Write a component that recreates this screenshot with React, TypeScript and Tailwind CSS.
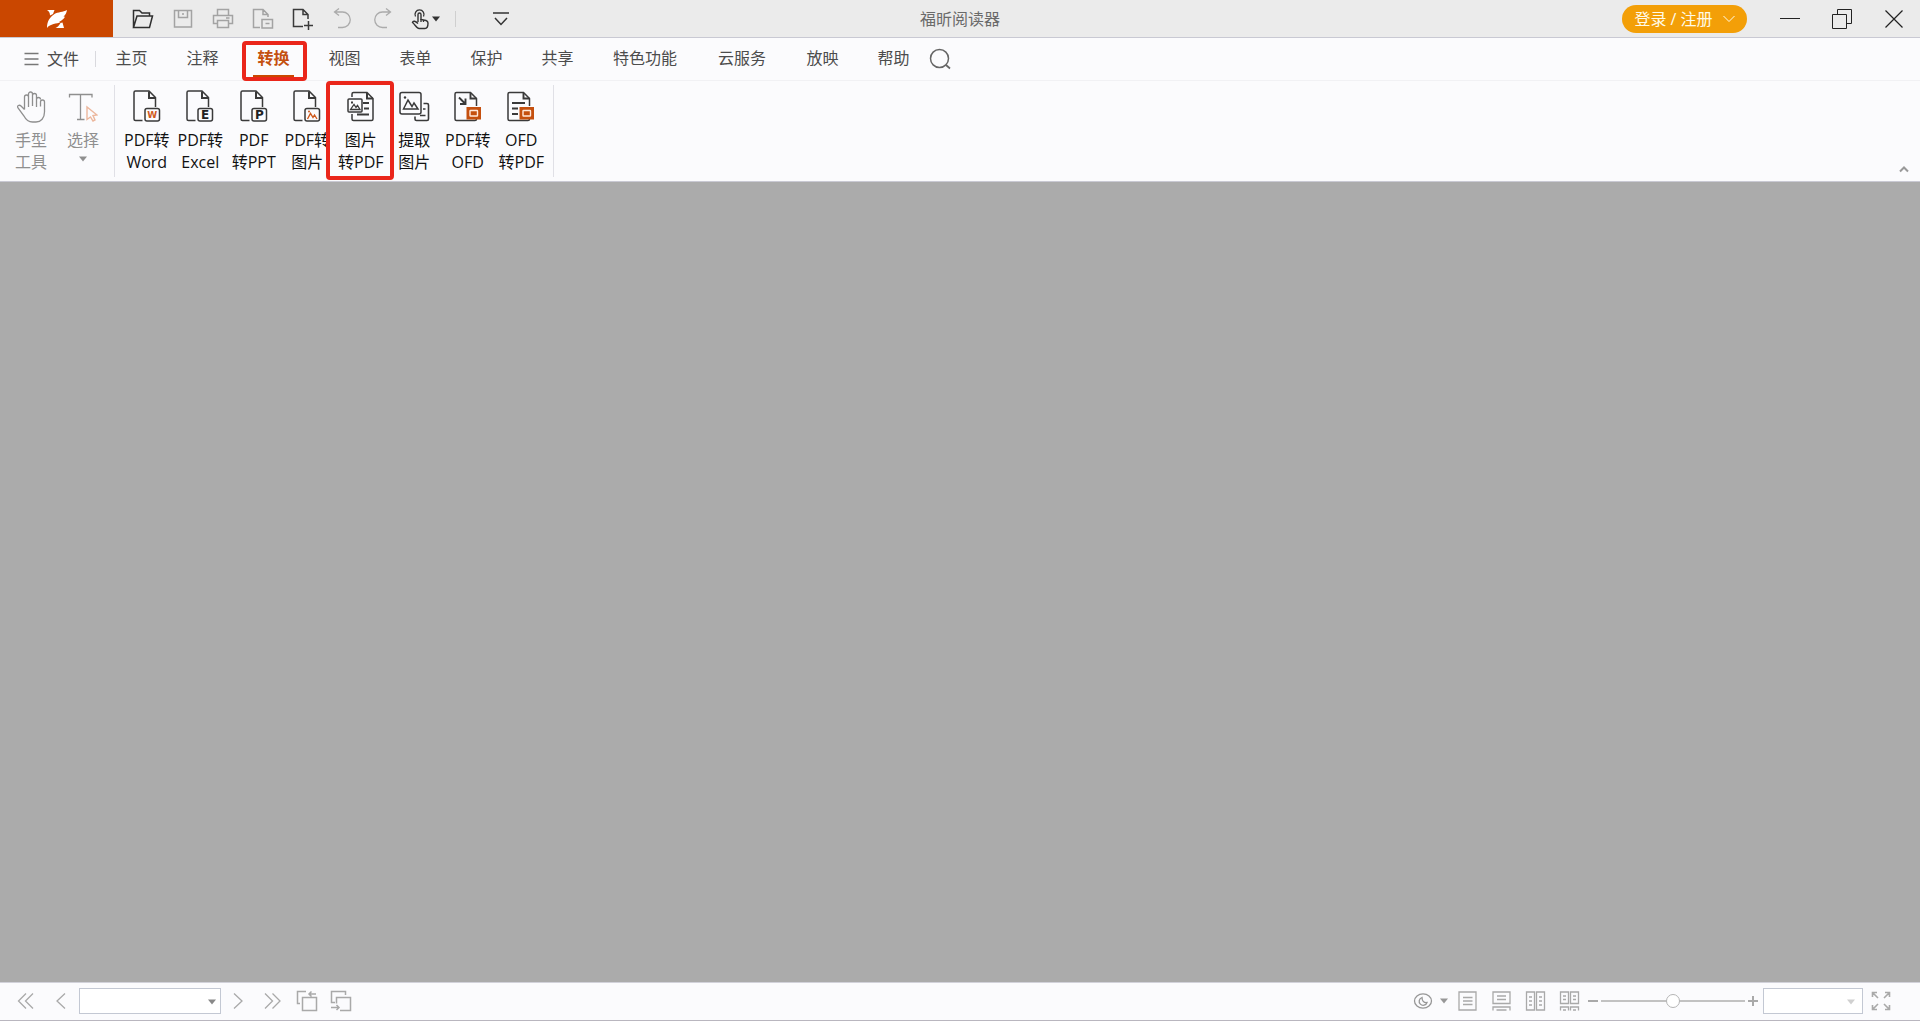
import React from 'react';

type IconProps = { className?: string; w?: number; h?: number; children?: React.ReactNode };

const Icon: React.FC<IconProps> = ({ className = '', w = 22, h = 22, children }) => (
  <svg
    className={`block shrink-0 ${className}`}
    width={w}
    height={h}
    viewBox={`0 0 ${w} ${h}`}
    fill="none"
    stroke="currentColor"
    strokeWidth="1.3"
    aria-hidden="true"
  >
    {children}
  </svg>
);

const Caret: React.FC<{ className?: string }> = ({ className = '' }) => (
  <Icon w={10} h={6} className={className}>
    <path d="M1 .5h8L5 5.5z" fill="currentColor" stroke="none" />
  </Icon>
);

/* Quick access toolbar */

const quickActions = [
  {
    label: '打开',
    color: 'text-[#2f2f2f]',
    icon: <path d="M1.5 19.5v-17h6l2.5 2.5h7.5v2.5M1.5 19.5l3.500-11.500h15.500l-3 11.500z" strokeWidth="1.5" />,
  },
  {
    label: '保存',
    color: 'text-[#a3a3a3]',
    icon: <path d="M2.5 2.5h17v16.5h-17zM6.5 2.5v7h9v-7M10 6h2" strokeWidth="1.5" />,
  },
  {
    label: '打印',
    color: 'text-[#a3a3a3]',
    icon: <path d="M5.5 7.5v-6h11v6M5.5 15.5h-4v-8h19v8h-4M5.5 12.5h11v7h-11zM14 10h3.5" strokeWidth="1.5" />,
  },
  {
    label: '另存为',
    color: 'text-[#a3a3a3]',
    icon: <path d="M8 19.5H1.5v-18h9.5l5 5V9M11 1.5v5h5M10 11.5h10.5v8.5H10zM13.500 15.5h4" strokeWidth="1.5" />,
  },
  {
    label: '新建',
    color: 'text-[#3a3a3a]',
    icon: <path d="M11 18.5H1.5v-17h9.5l5 5V11M11 1.5v5h5M16.500 13v9M12 17.5h9" strokeWidth="1.5" />,
  },
  {
    label: '撤销',
    color: 'text-[#ababab]',
    icon: <path d="M7 .5 2.5 4 7 7.5M2.5 4h8a7.500 7.500 0 0 1 0 15.5H6" />,
  },
  {
    label: '恢复',
    color: 'text-[#ababab]',
    icon: <path d="m14 .5 4.500 3.500L14 7.5M18.500 4h-8a7.500 7.500 0 0 0 0 15.5H15" />,
  },
];

const Logo = () => (
  <svg className="block" width="22" height="20" viewBox="0 0 22 20" fill="#fff" aria-hidden="true">
    <path d="M1 1h7.500L7 5 4 6.500C4 4 3 2 1 1z" />
    <path d="M21 1c-.5 3-1.500 5-3.500 6.500l1.500.2c-1.500 2.500-3.500 4-6 5l1.500.3C11 15 4 14.500 1 19 1 12 4 8 8.500 5 12 2.800 17 3.500 21 1z" />
    <path d="m14.500 14 2-.5L18 19H9.500c2-.8 3.500-2.500 5-5z" />
  </svg>
);

const TitleBar = () => (
  <header className="relative flex h-[38px] shrink-0 items-center border-b border-[#c9c9d3] bg-[#ebebeb]">
    <button aria-label="福昕" className="flex h-full w-[113px] items-center justify-center bg-[#ca4700]">
      <Logo />
    </button>
    <div className="ml-2.5 flex h-full items-center">
      {quickActions.map((action) => (
        <button key={action.label} aria-label={action.label} className={`flex h-full w-10 items-center justify-center ${action.color}`}>
          <Icon>{action.icon}</Icon>
        </button>
      ))}
      <button aria-label="触摸模式" className="ml-2 flex h-full items-center gap-0.5 text-[#333]">
        <Icon w={18}>
          <path d="M7 14V6.500a1.500 1.500 0 0 1 3 0v5l5 1c1.500.5 2 1 2 2.500 0 3-1 5.500-3 5.500H8c-2 0-4-4-6.500-6 .5-2 3-1.500 5.500 1" strokeWidth="1.4" />
          <path d="M4.500 8.500a4.500 4.500 0 1 1 8 0M10 11v3M12.500 12v2" />
        </Icon>
        <Caret />
      </button>
    </div>
    <div className="ml-3.5 h-4 w-px bg-[#cfcfcf]" />
    <button aria-label="自定义快速访问工具栏" className="ml-9 text-[#333]">
      <Icon w={18} h={18}>
        <path d="M1 3h16M3 8l6 6.500L15 8" strokeWidth="1.5" />
      </Icon>
    </button>
    <h1 className="absolute left-1/2 -translate-x-1/2 text-base text-[#6a6a6a]">福昕阅读器</h1>
    <button className="ml-auto mr-[17px] flex h-7 w-[125px] items-center justify-center gap-2.5 rounded-full bg-[#f39f08] text-base text-[#fffbe8]">
      登录 / 注册
      <Icon w={12} h={8}>
        <path d="m.5 1 5.500 5.500L11.500 1" strokeWidth="1" />
      </Icon>
    </button>
    <button aria-label="最小化" className="flex h-full w-[52px] items-center justify-center text-[#222]">
      <Icon>
        <path d="M1 10.500h20" strokeWidth="1" />
      </Icon>
    </button>
    <button aria-label="还原" className="flex h-full w-[52px] items-center justify-center text-[#222]">
      <Icon>
        <path d="M6.500 6V1.500h14v14H16M1.500 6.500h14v14h-14z" strokeWidth="1" />
      </Icon>
    </button>
    <button aria-label="关闭" className="flex h-full w-[52px] items-center justify-center text-[#222]">
      <Icon>
        <path d="m2.500 2.500 17 17M19.500 2.500l-17 17" strokeWidth="1.2" />
      </Icon>
    </button>
  </header>
);

/* Menu tabs */

const menuItems = [
  { label: '主页', width: 'w-[71px]' },
  { label: '注释', width: 'w-[71px]' },
  { label: '转换', width: 'w-[71px]', active: true },
  { label: '视图', width: 'w-[71px]' },
  { label: '表单', width: 'w-[71px]' },
  { label: '保护', width: 'w-[71px]' },
  { label: '共享', width: 'w-[71px]' },
  { label: '特色功能', width: 'w-[104px]' },
  { label: '云服务', width: 'w-[90px]' },
  { label: '放映', width: 'w-[71px]' },
  { label: '帮助', width: 'w-[71px]' },
];

const MenuBar = () => (
  <nav className="flex h-[43px] shrink-0 items-center border-b border-[#f1f1f4] text-base text-[#4c4c4c]">
    <button className="ml-6 flex items-center gap-2 pr-4">
      <Icon w={15} h={14} className="text-[#777]">
        <path d="M.5 1.500h14M.5 7h14M.5 12.500h14" />
      </Icon>
      文件
    </button>
    <div className="h-4 w-px bg-[#d9d9de]" />
    {menuItems.map((item) => (
      <button key={item.label} className={`relative h-full pb-0.5 ${item.width} ${item.active ? 'font-bold text-[#c4500f]' : ''}`}>
        {item.label}
        {item.active && (
          <>
            <span className="absolute inset-x-[15px] bottom-[3px] h-0.5 bg-[#ca4700]" />
            <span className="absolute -bottom-px left-1 right-0.5 top-[3px] rounded border-4 border-[#ea261b]" />
          </>
        )}
      </button>
    ))}
    <button aria-label="搜索" className="text-[#666]">
      <Icon>
        <circle cx="10.500" cy="10.500" r="9" strokeWidth="1.5" />
        <path d="m17 17 4 3.500" strokeWidth="1.8" />
      </Icon>
    </button>
  </nav>
);

/* Ribbon */

const PagePath = () => (
  <>
    <path d="M9.500 30.500H2.500a1.500 1.500 0 0 1-1.500-1.500V2.500A1.500 1.500 0 0 1 2.500 1H16l6.500 6.500V17" strokeWidth="1.5" />
    <path d="M16 1.500V8h6.500" strokeWidth="2" />
  </>
);

const BadgeIcon: React.FC<{ children: React.ReactNode }> = ({ children }) => (
  <Icon w={28} h={32}>
    <PagePath />
    <rect x="12" y="18.500" width="14.500" height="12.500" rx="2" strokeWidth="1.5" />
    {children}
  </Icon>
);

const letterClass = "font-['DejaVu_Sans'] font-bold";

const WordIcon = () => (
  <BadgeIcon>
    <text x="19.200" y="28" textAnchor="middle" className={`${letterClass} text-[9px]`} fill="#cf5a1d" stroke="none">W</text>
  </BadgeIcon>
);

const ExcelIcon = () => (
  <BadgeIcon>
    <text x="19.200" y="29" textAnchor="middle" className={`${letterClass} text-[12px]`} fill="#222" stroke="none">E</text>
  </BadgeIcon>
);

const PptIcon = () => (
  <BadgeIcon>
    <text x="19.500" y="29" textAnchor="middle" className={`${letterClass} text-[12px]`} fill="#222" stroke="none">P</text>
  </BadgeIcon>
);

const ToImageIcon = () => (
  <BadgeIcon>
    <path d="m14.500 29 3-5.500 2.500 4 1.500-2.500 2.500 4" stroke="#cf5a1d" strokeWidth="1.4" />
    <circle cx="16" cy="21.500" r="1" fill="#cf5a1d" stroke="none" />
  </BadgeIcon>
);

const FromImageIcon = () => (
  <Icon w={28} h={32}>
    <path d="M5 7V4a1.500 1.500 0 0 1 1.500-1.500H20l6 6V29a1.500 1.500 0 0 1-1.500 1.500h-18A1.500 1.500 0 0 1 5 29v-5" strokeWidth="1.5" />
    <path d="M20 3v5.500h6" strokeWidth="2" />
    <rect x="1" y="9" width="14" height="13" rx="1" strokeWidth="1.5" />
    <path d="m3.500 19.500 3.500-5 2 3 1.500-2 2.500 4z" strokeWidth="1.3" />
    <path d="M4 12.500h2M16 13h6M17 18.500h5M10 24.500h12" strokeWidth="1.8" />
  </Icon>
);

const ExtractIcon = () => (
  <Icon w={32} h={32}>
    <rect x="2" y="2.500" width="21" height="21.500" rx="2" strokeWidth="1.5" />
    <path d="m5.500 19 4.500-9 4 6.500 2-3.500 4 6z" strokeWidth="1.5" />
    <circle cx="7" cy="7.500" r="1.200" fill="currentColor" stroke="none" />
    <path d="M25.500 13.500H29a1.500 1.500 0 0 1 1.500 1.500v14a1.500 1.500 0 0 1-1.500 1.500H18.500A1.500 1.500 0 0 1 17 29v-2.500M25 19h2.500M22 25.500h5.500" strokeWidth="1.6" />
  </Icon>
);

const OfdBadge = () => (
  <>
    <rect x="12.500" y="17" width="14.500" height="12.500" fill="#c5500f" stroke="none" />
    <rect x="16" y="20.500" width="7.500" height="5.500" rx=".5" stroke="#ffe9dc" strokeWidth="1.4" />
  </>
);

const ToOfdIcon = () => (
  <Icon w={28} h={32}>
    <path d="M22.500 16V8.500l-6-6h-14A1.500 1.500 0 0 0 1 4v25a1.500 1.500 0 0 0 1.500 1.500h18.500a1.500 1.500 0 0 0 1.500-1.500" strokeWidth="1.5" />
    <path d="M16.500 3v5.500h6M5 7.500l6 6M11.500 8.500v5.500H6" strokeWidth="1.9" />
    <OfdBadge />
  </Icon>
);

const FromOfdIcon = () => (
  <Icon w={28} h={32}>
    <path d="M22.500 16V8.500l-6-6h-14A1.500 1.500 0 0 0 1 4v25a1.500 1.500 0 0 0 1.500 1.500h18.500a1.500 1.500 0 0 0 1.500-1.500" strokeWidth="1.5" />
    <path d="M16.500 3v5.500h6M5 13h13M5 18.500h6M5 24h6" strokeWidth="1.9" />
    <OfdBadge />
  </Icon>
);

const HandIcon = () => (
  <Icon w={30} h={34}>
    <path
      d="M8.500 19.500V7a2 2 0 0 1 4 0v10M12.500 16V4a2 2 0 0 1 4 0v12M16.500 15V5.500a2 2 0 0 1 4 0V17M20.500 16V9.500a2 2 0 0 1 4 0M24.500 16.500v-4.500a1.900 1.900 0 0 1 4 0V22c0 6-3.500 10-8.500 10h-3.500c-4 0-6.500-2-8.500-6L2 18c-1.500-2.500 1.500-3.500 3-2l3.500 3.500"
      strokeWidth="1.3"
    />
  </Icon>
);

const SelectIcon = () => (
  <Icon w={30} h={34}>
    <path d="M1.500 7.500V4.500H24v3M12.500 4.500v25M9 29.500h7.500" strokeWidth="1.3" />
    <path d="M19 17v12.500l3.500-2.500 2.500 4 2-1-2-4.500 4-.5z" stroke="#ecb79d" strokeWidth="1.4" />
  </Icon>
);

const convertTools = [
  { lines: ['PDF转', 'Word'], icon: <WordIcon /> },
  { lines: ['PDF转', 'Excel'], icon: <ExcelIcon /> },
  { lines: ['PDF', '转PPT'], icon: <PptIcon /> },
  { lines: ['PDF转', '图片'], icon: <ToImageIcon /> },
  { lines: ['图片', '转PDF'], icon: <FromImageIcon />, highlighted: true },
  { lines: ['提取', '图片'], icon: <ExtractIcon /> },
  { lines: ['PDF转', 'OFD'], icon: <ToOfdIcon /> },
  { lines: ['OFD', '转PDF'], icon: <FromOfdIcon /> },
];

const Ribbon = () => (
  <section className="flex h-[101px] shrink-0 border-b border-[#c9c9d3] text-base leading-[22px]">
    <div className="ml-[5px] flex text-[#8f8f8f]">
      <button className="flex w-[52px] flex-col items-center gap-[5px] pt-[9px]">
        <HandIcon />
        <span>手型<br />工具</span>
      </button>
      <button className="flex w-[52px] flex-col items-center gap-[5px] pt-[9px]">
        <SelectIcon />
        <span>选择</span>
        <Caret />
      </button>
    </div>
    <div className="my-1 ml-[5px] w-px bg-[#e0e0e6]" />
    <div className="ml-[5px] grid w-[428px] grid-cols-8 text-[#111]">
      {convertTools.map((tool) => (
        <button key={tool.lines.join('')} className="relative flex flex-col items-center gap-[7px] whitespace-nowrap pt-[9px]">
          <span className="text-[#3a3a3a]">{tool.icon}</span>
          <span>{tool.lines[0]}<br />{tool.lines[1]}</span>
          {tool.highlighted && <span className="absolute -left-2 -right-1.5 bottom-px top-0 rounded border-4 border-[#ea261b]" />}
        </button>
      ))}
    </div>
    <div className="my-1 ml-[5px] w-px bg-[#e0e0e6]" />
    <button aria-label="折叠功能区" className="mb-2 ml-auto mr-2.5 self-end text-[#999]">
      <Icon w={12} h={8}>
        <path d="m2 6.500 4-4 4 4" strokeWidth="2" />
      </Icon>
    </button>
  </section>
);

/* Status bar */

const viewModes = [
  { label: '单页', path: 'M2 2h17v18H2zM6 7.500h9.500M6 11h9.500M6 14.500h9.500' },
  { label: '连续', path: 'M2 2h17v11.500H2zM6 6h9M6 9.500h9M2 20.500v-3.500h17v3.500M5.500 20h10' },
  { label: '双页', path: 'M1.500 2h8v18h-8zM11.500 2h8v18h-8zM4 7h3M4 11h3M4 15h3M14 7h3M14 11h3M14 15h3' },
  { label: '双页连续', path: 'M1.500 2h8v11.500h-8zM11.500 2h8v11.500h-8zM4 6h3M4 9.500h3M14 6h3M14 9.500h3M1.500 20.500v-3.500h8v3.500M11.500 20.500v-3.500h8v3.500M4 20h3M14 20h3' },
];

const StatusBar = () => (
  <footer className="flex h-[39px] shrink-0 items-center justify-between border-b border-t border-b-[#b9b6bf] border-t-[#d2d2da] pb-0.5 text-[#a9a9a9]">
    <div className="flex items-center">
      <button aria-label="第一页" className="ml-4">
        <Icon w={20}><path d="m10 3.500-7.500 7.500 7.500 7.500M17 3.500 9.500 11l7.500 7.500" /></Icon>
      </button>
      <button aria-label="上一页" className="ml-[18px]">
        <Icon w={14}><path d="M11 3.500 3 11l8 7.500" /></Icon>
      </button>
      <div className="relative ml-[11px] h-[26px] w-[142px] border border-[#c3c8d3] bg-white">
        <select aria-label="页码" className="h-full w-full appearance-none bg-transparent outline-none" />
        <Caret className="pointer-events-none absolute right-[3px] top-2.5 text-[#888]" />
      </div>
      <button aria-label="下一页" className="ml-2.5">
        <Icon w={14}><path d="m3 3.500 8 7.500-8 7.500" /></Icon>
      </button>
      <button aria-label="最后一页" className="ml-[17px]">
        <Icon w={20}><path d="m3 3.500 7.500 7.500L3 18.500M10.500 3.500 18 11l-7.500 7.500" /></Icon>
      </button>
      <button aria-label="上一视图" className="ml-3.5">
        <Icon><path d="M4 13.500H1.500v-12H10M6.500 7.500h14v13h-14zM20 4h-7M15.500 1.500 13 4l2.500 2.500" strokeWidth="1.5" /></Icon>
      </button>
      <button aria-label="下一视图" className="ml-3">
        <Icon><path d="M5 12.500H1.500v-11h14V5M10 20.500h10.500v-13h-14v6M1 17.500h8M6.500 15 9 17.500 6.500 20" strokeWidth="1.5" /></Icon>
      </button>
    </div>
    <div className="mr-[29px] flex items-center">
      <button aria-label="阅读模式" className="flex items-center gap-1.5 text-[#979797]">
        <Icon w={20}>
          <ellipse cx="10" cy="11" rx="8.500" ry="7.200" />
          <path d="M9 7.500a4 4 0 1 0 5 5c-3 .5-5-1.500-5-5z" />
        </Icon>
        <Caret />
      </button>
      <div className="ml-2 flex gap-3">
        {viewModes.map((mode) => (
          <button key={mode.label} aria-label={mode.label}>
            <Icon><path d={mode.path} /></Icon>
          </button>
        ))}
      </div>
      <button aria-label="缩小" className="ml-1.5">
        <Icon w={12}><path d="M1 11h10" strokeWidth="2" /></Icon>
      </button>
      <input
        type="range"
        aria-label="缩放"
        defaultValue={50}
        className="mx-0.5 h-[14px] w-[144px] appearance-none bg-transparent [&::-webkit-slider-runnable-track]:h-0.5 [&::-webkit-slider-runnable-track]:bg-[#c2c2c2] [&::-webkit-slider-thumb]:-mt-1.5 [&::-webkit-slider-thumb]:size-3.5 [&::-webkit-slider-thumb]:appearance-none [&::-webkit-slider-thumb]:rounded-full [&::-webkit-slider-thumb]:border [&::-webkit-slider-thumb]:border-[#b5b5b5] [&::-webkit-slider-thumb]:bg-white"
      />
      <button aria-label="放大">
        <Icon w={12}><path d="M1 11h10M6 6v10" strokeWidth="2" /></Icon>
      </button>
      <div className="relative ml-1 h-[26px] w-[100px] border border-[#c3c8d3] bg-white">
        <select aria-label="缩放比例" className="h-full w-full appearance-none bg-transparent outline-none" />
        <Caret className="pointer-events-none absolute right-1.5 top-2.5 text-[#d0d0d0]" />
      </div>
      <button aria-label="全屏" className="ml-2">
        <Icon w={20}>
          <path d="M1.500 7V2.500H6M2 3l5 5M14 2.500h4.500V7M18 3l-5 5M1.500 15v4.500H6M2 19l5-5M14 19.500h4.500V15M18 19l-5-5" strokeWidth="1.6" />
        </Icon>
      </button>
    </div>
  </footer>
);

const App: React.FC = () => {
  return (
    <div className="flex min-h-screen flex-col bg-[#fbfbfd] font-['Open_Sans','Noto_Sans_CJK_SC',sans-serif]">
      <TitleBar />
      <MenuBar />
      <Ribbon />
      <main className="flex-1 bg-[#ababab]" />
      <StatusBar />
    </div>
  );
};

export default App;
